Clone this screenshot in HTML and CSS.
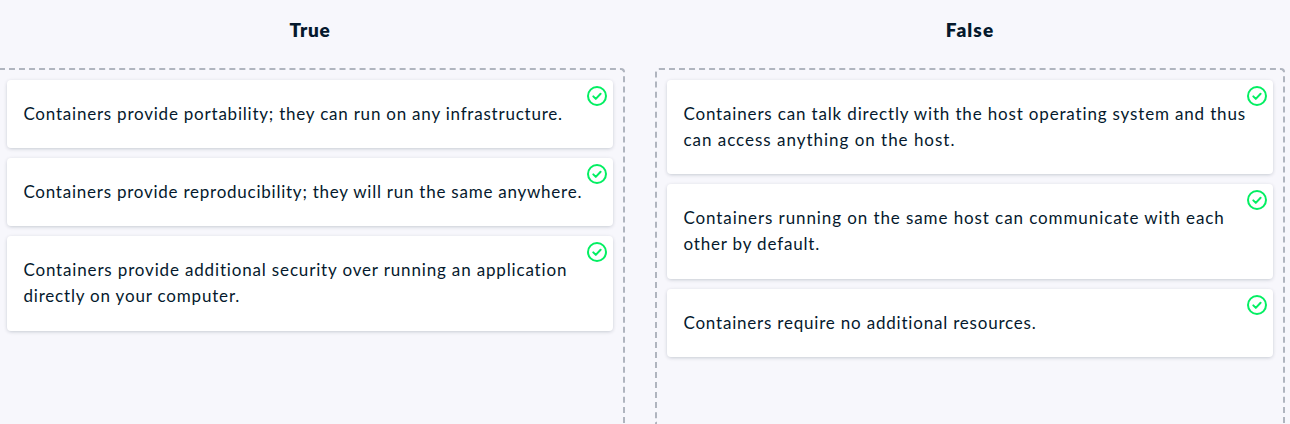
FILE: index.html
```html
<!DOCTYPE html>
<html lang="en">
<head>
<meta charset="utf-8">
<title>True or False</title>
<link rel="stylesheet" href="styles.css">
</head>
<body>
<svg class="defs" width="0" height="0"><symbol id="check" viewBox="0 0 20 20"><circle cx="10" cy="10" r="9" fill="none" stroke="currentColor" stroke-width="2"/><path d="M6.3 10.4l2.5 2.5 4.8-5.1" fill="none" stroke="currentColor" stroke-width="2" stroke-linecap="round" stroke-linejoin="round"/></symbol></svg>
<main class="board">
  <section class="column">
    <h2 class="title title-true">True</h2>
    <div class="zone">
      <article class="card"><p class="line l1">Containers provide portability; they can run on any infrastructure.</p><svg class="icon"><use href="#check"/></svg></article>
      <article class="card"><p class="line l2">Containers provide reproducibility; they will run the same anywhere.</p><svg class="icon"><use href="#check"/></svg></article>
      <article class="card"><p class="line l3">Containers provide additional security over running an application</p><p class="line l4">directly on your computer.</p><svg class="icon"><use href="#check"/></svg></article>
    </div>
  </section>
  <section class="column">
    <h2 class="title title-false">False</h2>
    <div class="zone">
      <article class="card"><p class="line l5">Containers can talk directly with the host operating system and thus</p><p class="line l6">can access anything on the host.</p><svg class="icon"><use href="#check"/></svg></article>
      <article class="card"><p class="line l7">Containers running on the same host can communicate with each</p><p class="line l8">other by default.</p><svg class="icon"><use href="#check"/></svg></article>
      <article class="card"><p class="line l9">Containers require no additional resources.</p><svg class="icon"><use href="#check"/></svg></article>
    </div>
  </section>
</main>
</body>
</html>
```
FILE: styles.css
```css
* { box-sizing: border-box; }
body { margin: 0; height: 424px; overflow: hidden; background: #f7f7fc; color: #05192d; font-family: Lato, "Open Sans", sans-serif; }
.defs { display: block; }
.board { display: flex; gap: 30px; margin-left: -5px; width: 1290px; }
.column { flex: 0 0 630px; }
.title { margin: 0; height: 68px; padding-top: 17px; font-size: 19px; font-weight: 800; line-height: 26px; text-align: center; }
.title-true { letter-spacing: .7px; }
.title-false { letter-spacing: 1.1px; }
.zone { display: flex; flex-direction: column; gap: 10px; height: 356px; padding: 10px; border: 2px dashed #b0b5bf; border-bottom: 0; border-radius: 4px 4px 0 0; }
.card { position: relative; padding: 20.9px 16px 21.2px 16.4px; border-radius: 4px; background: #fff; box-shadow: 0 1px 4px -1px rgba(5, 25, 45, .3); }
.line { margin: 0; font-size: 17px; line-height: 26.1px; white-space: nowrap; }
.l1 { letter-spacing: .78px; }
.l2 { letter-spacing: .76px; }
.l3 { letter-spacing: .84px; }
.l4 { letter-spacing: .82px; }
.l5 { letter-spacing: .84px; }
.l6 { letter-spacing: .98px; }
.l7 { letter-spacing: .91px; }
.l8 { letter-spacing: .83px; }
.l9 { padding-top: .4px; letter-spacing: .8px; }
.icon { position: absolute; top: 6px; right: 6px; width: 20px; height: 20px; color: #03ef62; }
```
